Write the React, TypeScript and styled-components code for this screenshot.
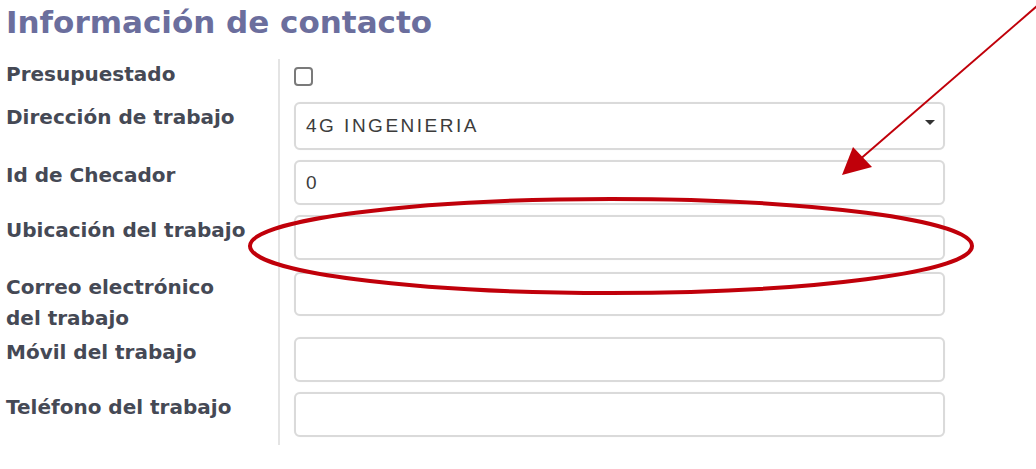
import React from "react";
import styled, { createGlobalStyle } from "styled-components";

const GlobalStyle = createGlobalStyle`
  html, body {
    margin: 0;
    padding: 0;
    background: #ffffff;
  }
  body {
    font-family: "DejaVu Sans", Verdana, sans-serif;
  }
`;

const Page = styled.div`
  position: relative;
  width: 1036px;
  height: 469px;
  overflow: hidden;
  padding: 0 6px;
  box-sizing: border-box;
`;

const Title = styled.h1`
  margin: 0;
  font-family: "DejaVu Sans", Verdana, sans-serif;
  font-size: 31px;
  line-height: 44px;
  font-weight: 700;
  color: #6b6e9d;
`;

const Form = styled.div`
  display: grid;
  grid-template-columns: 274px 666px;
  margin-top: 15px;
`;

const Label = styled.div`
  border-right: 2px solid #e4e4e4;
  font-family: "DejaVu Sans", Verdana, sans-serif;
  font-size: 20px;
  line-height: 31px;
  font-weight: 700;
  color: #454955;
  box-sizing: border-box;
`;

const LabelText = styled.span`
  display: block;
  max-width: 246px;
`;

const Field = styled.div<{ $pb: number; $h?: number }>`
  padding-left: 14px;
  padding-bottom: ${(p) => p.$pb}px;
  ${(p) => (p.$h ? `height: ${p.$h}px; box-sizing: border-box;` : "")}
`;

const Box = styled.div<{ $h: number }>`
  position: relative;
  box-sizing: border-box;
  width: 651px;
  height: ${(p) => p.$h}px;
  border: 2px solid #dadada;
  border-radius: 6px;
  background: #fff;
  box-shadow: 0 0 1px rgba(0, 0, 0, 0.08);
  display: flex;
  align-items: center;
  padding-left: 10px;
  font-family: "Liberation Sans", Arial, sans-serif;
  font-size: 19px;
  letter-spacing: 2.5px;
  color: #3c3c3c;
`;

const Caret = styled.span`
  position: absolute;
  right: 8px;
  top: 16px;
  width: 0;
  height: 0;
  border-left: 5px solid transparent;
  border-right: 5px solid transparent;
  border-top: 5px solid #333;
`;

const Check = styled.div`
  margin-top: 8px;
  width: 19px;
  height: 19px;
  box-sizing: border-box;
  border: 2px solid #7a7a7a;
  border-radius: 4px;
  background: #fff;
`;

const Overlay = styled.svg`
  position: absolute;
  left: 0;
  top: 0;
  pointer-events: none;
`;

type Row = {
  label: string;
  kind: "check" | "select" | "input";
  value?: string;
  h?: number;
  pb: number;
};

const rows: Row[] = [
  { label: "Presupuestado", kind: "check", pb: 0 },
  { label: "Dirección de trabajo", kind: "select", value: "4G INGENIERIA", h: 48, pb: 10 },
  { label: "Id de Checador", kind: "input", value: "0", h: 45, pb: 10 },
  { label: "Ubicación del trabajo", kind: "input", value: "", h: 45, pb: 12 },
  { label: "Correo electrónico del trabajo", kind: "input", value: "", h: 44, pb: 21 },
  { label: "Móvil del trabajo", kind: "input", value: "", h: 45, pb: 10 },
  { label: "Teléfono del trabajo", kind: "input", value: "", h: 45, pb: 8 },
];

export default function App() {
  return (
    <>
      <GlobalStyle />
      <Page>
        <Title>Información de contacto</Title>
        <Form>
          {rows.map((r, i) => (
            <React.Fragment key={i}>
              <Label>
                <LabelText>{r.label}</LabelText>
              </Label>
              <Field $pb={r.pb} $h={r.kind === "check" ? 43 : undefined}>
                {r.kind === "check" ? (
                  <Check />
                ) : (
                  <Box $h={r.h ?? 45}>
                    {r.value}
                    {r.kind === "select" && <Caret />}
                  </Box>
                )}
              </Field>
            </React.Fragment>
          ))}
        </Form>
        <Overlay width="1036" height="469" viewBox="0 0 1036 469">
          <ellipse cx="611" cy="246" rx="361" ry="47" fill="none" stroke="#c0000a" strokeWidth="4" />
          <line x1="1044" y1="0" x2="858" y2="161" stroke="#c0000a" strokeWidth="2" />
          <polygon points="842,175 853,147 872,167" fill="#c0000a" />
        </Overlay>
      </Page>
    </>
  );
}
